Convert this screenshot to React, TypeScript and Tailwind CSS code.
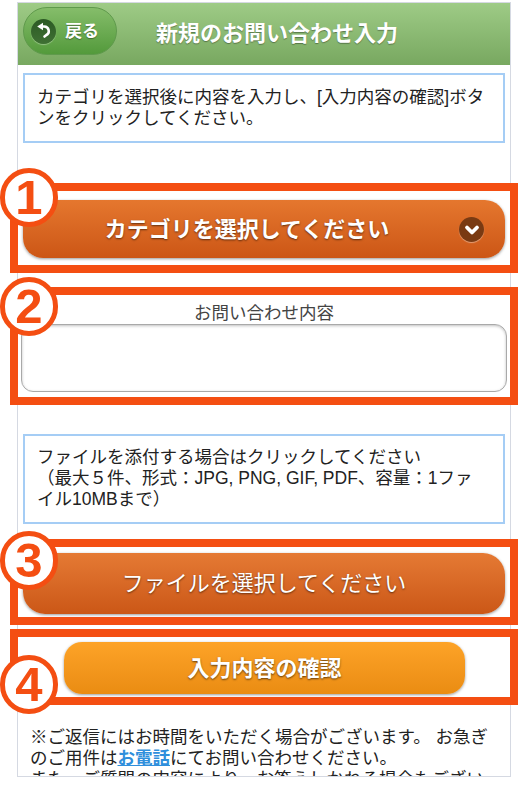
import React from "react";

const font = "[font-family:'Liberation_Sans','Noto_Sans_CJK_JP',sans-serif]";

function Marker({ n, top, h, boxTop }: { n: string; top: string; h: string; boxTop: string }) {
  return (
    <>
      <div className={`absolute left-[10px] w-[508px] border-[8px] border-[#f44e12] pointer-events-none ${boxTop} ${h}`} />
      <div className={`absolute left-0 w-[58px] h-[59px] rounded-full bg-white border-[5px] border-[#f44e12] flex items-center justify-center text-[#f44e12] text-[49px] font-bold leading-none [font-family:'Liberation_Sans',sans-serif] ${top}`}>
        {n}
      </div>
    </>
  );
}

function App() {
  return (
    <div className={`relative w-[528px] h-[796px] bg-white overflow-hidden ${font}`}>
      <div className="ml-[17px] mt-[2px] w-[494px] h-[775px] border border-[#d5d9e2] overflow-hidden flex flex-col">
        <header className="relative h-[62px] shrink-0 flex items-center justify-center bg-gradient-to-b from-[#9ecb86] to-[#78a860]">
          <button className="absolute left-[5px] top-[4px] w-[94px] h-[48px] rounded-[24px] border border-[#5f9a4c] bg-gradient-to-b from-[#85bd6a] to-[#539a3b] flex items-center pl-[7px] gap-[9px]">
            <span className="w-[25px] h-[25px] rounded-full bg-gradient-to-b from-[#2c5a24] to-[#3f7034] shadow-[0_1px_1px_rgba(255,255,255,0.35)] flex items-center justify-center">
              <svg width="18" height="18" viewBox="0 0 18 18" fill="none">
                <path d="M7 4.5h2a4.6 4.6 0 0 1 2 8.8L9.5 14.5" stroke="#fff" strokeWidth="2.6" strokeLinecap="round" />
                <path d="M8 0.8v7.4L2.2 4.5z" fill="#fff" />
              </svg>
            </span>
            <span className="text-white text-[17px] font-bold leading-none [text-shadow:0_1px_1px_rgba(0,0,0,0.35)]">戻る</span>
          </button>
          <h1 className="ml-[26px] text-white text-[22px] font-bold leading-none [text-shadow:0_1px_1px_rgba(0,0,0,0.35)]">新規のお問い合わせ入力</h1>
        </header>

        <div className="mx-[5px] mt-[8px] h-[70px] shrink-0 border-2 border-[#a5cdf5] px-[12px] pt-[12px] text-[17.5px] leading-[21px] text-[#222]">
          カテゴリを選択後に内容を入力し、[入力内容の確認]ボタンをクリックしてください。
        </div>

        <button className="mx-[5px] mt-[57px] h-[58px] shrink-0 relative rounded-[20px] bg-gradient-to-b from-[#e5772e] to-[#cc5615] shadow-[0_1px_3px_rgba(0,0,0,0.4)] text-white text-[22px] font-bold [text-shadow:0_1px_2px_rgba(0,0,0,0.55)] flex items-center justify-center">
          <span className="mr-[34px]">カテゴリを選択してください</span>
          <span className="absolute right-[21px] top-[17px] w-[25px] h-[25px] rounded-full bg-[#7a3a12] shadow-[0_1px_1px_rgba(255,255,255,0.4)] flex items-center justify-center">
            <svg width="18" height="18" viewBox="0 0 18 18" fill="none">
              <path d="M4 6.5L9 11.5L14 6.5" stroke="#fff" strokeWidth="3.8" strokeLinecap="round" strokeLinejoin="round" />
            </svg>
          </span>
        </button>

        <div className="mt-[44px] h-[22px] shrink-0 text-center text-[17.5px] leading-[22px] text-[#444]">お問い合わせ内容</div>
        <div className="mx-[3px] h-[68px] shrink-0 rounded-[12px] border border-[#a9a9a9] bg-white shadow-[inset_0_1px_3px_rgba(0,0,0,0.25)]" />

        <div className="mx-[5px] mt-[42px] h-[90px] shrink-0 border-2 border-[#a5cdf5] px-[12px] pt-[11px] text-[17.5px] leading-[21px] text-[#222]">
          ファイルを添付する場合はクリックしてください
          <br />
          （最大５件、形式：JPG, PNG, GIF, PDF、容量：1ファ
          <br />
          イル10MBまで）
        </div>

        <button className="mx-[5px] mt-[29px] h-[61px] shrink-0 rounded-[22px] bg-gradient-to-b from-[#e57a34] to-[#cb5716] shadow-[0_1px_3px_rgba(0,0,0,0.4)] text-white text-[22px] [text-shadow:0_1px_2px_rgba(0,0,0,0.55)] flex items-center justify-center">
          ファイルを選択してください
        </button>

        <button className="ml-[46px] mt-[28px] w-[401px] h-[52px] shrink-0 rounded-[18px] bg-gradient-to-b from-[#fda327] to-[#ea8c12] shadow-[0_1px_3px_rgba(0,0,0,0.4)] text-white text-[22px] font-bold [text-shadow:0_1px_2px_rgba(0,0,0,0.6)] flex items-center justify-center">
          入力内容の確認
        </button>

        <p className="mx-[12px] mt-[33px] text-[17.5px] leading-[21px] text-[#222]">
          ※ご返信にはお時間をいただく場合がございます。 お急ぎのご用件は
          <a className="font-bold text-[#2f8fdc] underline">お電話</a>
          にてお問い合わせください。
          <br />
          また、ご質問の内容により、お答えしかねる場合もございます。
        </p>
      </div>

      <Marker n="1" top="top-[168px]" boxTop="top-[183px]" h="h-[90px]" />
      <Marker n="2" top="top-[277px]" boxTop="top-[287px]" h="h-[118px]" />
      <Marker n="3" top="top-[531px]" boxTop="top-[539px]" h="h-[86px]" />
      <Marker n="4" top="top-[655px]" boxTop="top-[629px]" h="h-[76px]" />
    </div>
  );
}

export default App;
